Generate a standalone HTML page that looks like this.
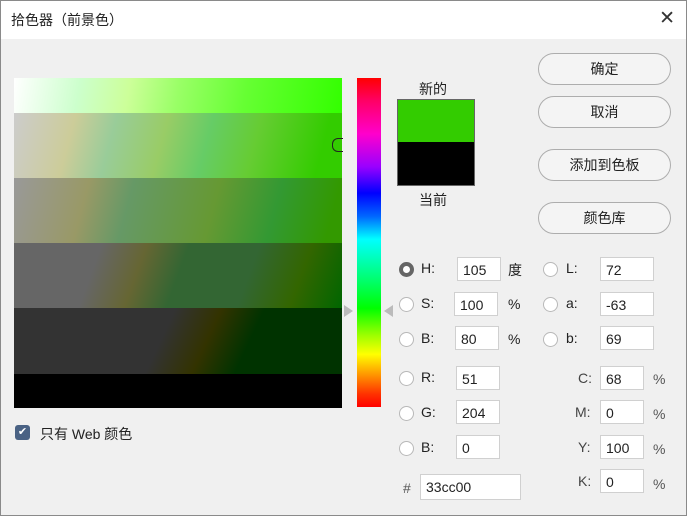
<html><head><style>
body{margin:0;width:687px;height:516px;overflow:hidden;background:#f0f0f0;font-family:"Liberation Sans","Noto Sans CJK SC",sans-serif;font-size:14px;color:#222}
.win{position:absolute;left:0;top:0;width:685px;height:514px;border:1px solid #8a8a8a;background:#f0f0f0}
.title{position:absolute;left:0;top:0;width:685px;height:38px;background:#fff}
.title span{position:absolute;left:10px;top:9px;font-size:14px}
.x{position:absolute;right:11px;top:6px;font-size:19px;font-weight:300;color:#333}
.a{position:absolute}
.row{position:absolute;left:13px;width:328px}
.btn{position:absolute;left:537px;width:131px;height:30px;border:1px solid #adadad;border-radius:16px;background:#f4f4f4;text-align:center;line-height:30px;font-size:14px}
.in{position:absolute;height:24px;border:1px solid #d0d0d0;background:#fff;line-height:24px;padding-left:5px;box-sizing:border-box;font-size:14px}
.rd{position:absolute;width:13px;height:13px;border:1px solid #b8b8b8;border-radius:50%;background:#fff}
.l{position:absolute;font-size:14px}
</style></head><body><div class="win">
<div class="title"><span>拾色器（前景色）</span><div class="x">✕</div></div>
<div class="row" style="top:77px;height:35px;background:linear-gradient(100deg,#fff 0%,#ccffcc 20%,#ccff99 35%,#99ff66 50%,#66ff33 70%,#33ff00 100%)"></div>
<div class="row" style="top:112px;height:65px;background:linear-gradient(105deg,#ccc 0%,#cccc99 18%,#99cc99 30%,#99cc66 45%,#66cc66 58%,#66cc33 72%,#33cc00 92%)"></div>
<div class="row" style="top:177px;height:65px;background:linear-gradient(105deg,#999 0%,#999966 22%,#669966 35%,#669933 60%,#339933 78%,#339900 95%)"></div>
<div class="row" style="top:242px;height:65px;background:linear-gradient(110deg,#666 0%,#666 25%,#663 38%,#336633 50%,#336633 70%,#336600 85%,#006600 100%)"></div>
<div class="row" style="top:307px;height:66px;background:linear-gradient(115deg,#333 0%,#333 45%,#330 58%,#003300 70%)"></div>
<div class="row" style="top:373px;height:34px;background:#000"></div>
<div class="a" style="left:331px;top:137px;width:10px;height:12px;border:1px solid #222;border-right:none;border-radius:6px 0 0 6px"></div>
<div class="a" style="left:356px;top:77px;width:24px;height:329px;background:linear-gradient(#f00 0%,#f06 7%,#f0c 17%,#90f 27%,#00f 35%,#06f 42%,#0ff 49%,#0f6 62%,#0f0 70%,#9f0 78%,#ff0 84%,#f90 90%,#f30 96%,#f00 100%)"></div>
<div class="a" style="left:343px;top:304px;width:0;height:0;border-top:6px solid transparent;border-bottom:6px solid transparent;border-left:9px solid #bbb"></div>
<div class="a" style="left:383px;top:304px;width:0;height:0;border-top:6px solid transparent;border-bottom:6px solid transparent;border-right:9px solid #bbb"></div>
<div class="a" style="left:418px;top:78px;font-size:14px">新的</div>
<div class="a" style="left:396px;top:98px;width:76px;height:43px;background:#33cc00;border:1px solid #666;border-bottom:none"></div>
<div class="a" style="left:396px;top:141px;width:76px;height:43px;background:#000;border:1px solid #666;border-top:none"></div>
<div class="a" style="left:418px;top:189px;font-size:14px">当前</div>
<div class="btn" style="top:52px">确定</div>
<div class="btn" style="top:95px">取消</div>
<div class="btn" style="top:148px">添加到色板</div>
<div class="btn" style="top:201px">颜色库</div>
<div class="rd" style="left:398px;top:261px;border:4px solid #666;width:7px;height:7px"></div>
<div class="l" style="left:420px;top:259px">H:</div><div class="in" style="left:456px;top:256px;width:44px">105</div><div class="l" style="left:507px;top:259px">度</div>
<div class="rd" style="left:398px;top:296px"></div><div class="l" style="left:420px;top:294px">S:</div><div class="in" style="left:453px;top:291px;width:44px">100</div><div class="l" style="left:507px;top:295px">%</div>
<div class="rd" style="left:398px;top:331px"></div><div class="l" style="left:420px;top:329px">B:</div><div class="in" style="left:454px;top:325px;width:44px">80</div><div class="l" style="left:507px;top:330px">%</div>
<div class="rd" style="left:542px;top:261px"></div><div class="l" style="left:565px;top:259px">L:</div><div class="in" style="left:599px;top:256px;width:54px">72</div>
<div class="rd" style="left:542px;top:296px"></div><div class="l" style="left:565px;top:294px">a:</div><div class="in" style="left:599px;top:291px;width:54px">-63</div>
<div class="rd" style="left:542px;top:331px"></div><div class="l" style="left:565px;top:329px">b:</div><div class="in" style="left:599px;top:325px;width:54px">69</div>
<div class="rd" style="left:398px;top:370px"></div><div class="l" style="left:420px;top:368px">R:</div><div class="in" style="left:455px;top:365px;width:44px">51</div>
<div class="rd" style="left:398px;top:405px"></div><div class="l" style="left:420px;top:403px">G:</div><div class="in" style="left:455px;top:399px;width:44px">204</div>
<div class="rd" style="left:398px;top:440px"></div><div class="l" style="left:420px;top:438px">B:</div><div class="in" style="left:455px;top:434px;width:44px">0</div>
<div class="l" style="left:402px;top:479px;color:#555">#</div><div class="in" style="left:419px;top:473px;width:101px;height:26px">33cc00</div>
<div class="l" style="left:577px;top:369px;color:#444">C:</div><div class="in" style="left:599px;top:365px;width:44px">68</div><div class="l" style="left:652px;top:370px;color:#555">%</div>
<div class="l" style="left:574px;top:403px;color:#444">M:</div><div class="in" style="left:599px;top:399px;width:44px">0</div><div class="l" style="left:652px;top:405px;color:#555">%</div>
<div class="l" style="left:577px;top:438px;color:#444">Y:</div><div class="in" style="left:599px;top:434px;width:44px">100</div><div class="l" style="left:652px;top:440px;color:#555">%</div>
<div class="l" style="left:577px;top:472px;color:#444">K:</div><div class="in" style="left:599px;top:468px;width:44px">0</div><div class="l" style="left:652px;top:475px;color:#555">%</div>
<div class="a" style="left:14px;top:424px;width:15px;height:15px;background:#4a6284;border-radius:3px;color:#fff;font-size:11px;line-height:15px;text-align:center">✔</div>
<div class="l" style="left:39px;top:423px">只有 Web 颜色</div>
</div></body></html>
